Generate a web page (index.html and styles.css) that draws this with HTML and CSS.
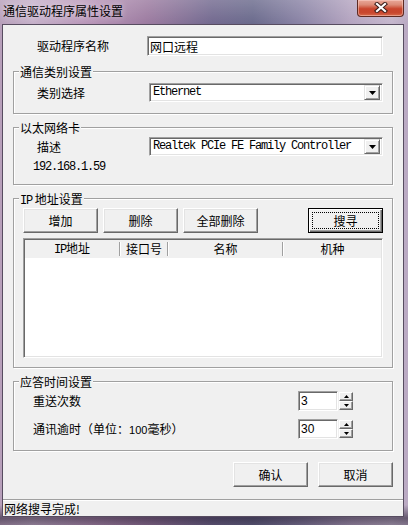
FILE: index.html
```html
<!DOCTYPE html>
<html lang="zh-CN">
<head>
<meta charset="utf-8">
<title>通信驱动程序属性设置</title>
<link rel="stylesheet" href="styles.css">
</head>
<body>
<div class="window">
  <div class="titlebar">
    <span class="title">通信驱动程序属性设置</span>
    <button class="close" type="button" aria-label="关闭">
      <svg width="14" height="11" viewBox="0 0 14 11"><path d="M3 2 L11 9 M11 2 L3 9" stroke="#3b1d19" stroke-width="4.2" stroke-linecap="square" fill="none"/><path d="M3 2 L11 9 M11 2 L3 9" stroke="#ffffff" stroke-width="2.2" stroke-linecap="square" fill="none"/></svg>
    </button>
  </div>
  <div class="client">
    <div class="content">
      <div class="name-row">
        <span class="lbl">驱动程序名称</span>
        <div class="edit name-edit">网口远程</div>
      </div>

      <div class="group g1">
        <span class="gtitle">通信类别设置</span>
        <div class="gbody">
          <div class="row">
            <span class="lbl wide">类别选择</span>
            <div class="combo"><span class="ctext m">Ethernet</span><span class="drop"><svg width="7" height="4" viewBox="0 0 7 4"><polygon points="0,0 7,0 3.5,4" fill="#000"/></svg></span></div>
          </div>
        </div>
      </div>

      <div class="group g2">
        <span class="gtitle">以太网络卡</span>
        <div class="gbody">
          <div class="row">
            <span class="lbl wide">描述</span>
            <div class="combo"><span class="ctext m">Realtek PCIe FE Family Controller</span><span class="drop"><svg width="7" height="4" viewBox="0 0 7 4"><polygon points="0,0 7,0 3.5,4" fill="#000"/></svg></span></div>
          </div>
          <div class="ip m">192.168.1.59</div>
        </div>
      </div>

      <div class="group g3">
        <span class="gtitle"><span class="m">IP</span> 地址设置</span>
        <div class="gbody">
          <div class="btnrow">
            <button class="btn" type="button">增加</button>
            <button class="btn" type="button">删除</button>
            <button class="btn" type="button">全部删除</button>
            <button class="btn default" type="button"><span class="focus">搜寻</span></button>
          </div>
          <div class="list">
            <div class="lhead">
              <span class="hc"><span class="m">IP</span>地址</span><i class="sep"></i>
              <span class="hc">接口号</span><i class="sep"></i>
              <span class="hc">名称</span><i class="sep"></i>
              <span class="hc">机种</span>
            </div>
          </div>
        </div>
      </div>

      <div class="group g4">
        <span class="gtitle">应答时间设置</span>
        <div class="gbody">
          <div class="srow">
            <span class="slbl">重送次数</span>
            <div class="spin"><div class="edit sedit">3</div><div class="updown"><span class="ud"><svg width="5" height="3" viewBox="0 0 5 3"><polygon points="2.5,0 5,3 0,3" fill="#000"/></svg></span><span class="ud"><svg width="5" height="3" viewBox="0 0 5 3"><polygon points="0,0 5,0 2.5,3" fill="#000"/></svg></span></div></div>
          </div>
          <div class="srow second">
            <span class="slbl">通讯逾时（单位：<span class="s">100</span>毫秒）</span>
            <div class="spin"><div class="edit sedit">30</div><div class="updown"><span class="ud"><svg width="5" height="3" viewBox="0 0 5 3"><polygon points="2.5,0 5,3 0,3" fill="#000"/></svg></span><span class="ud"><svg width="5" height="3" viewBox="0 0 5 3"><polygon points="0,0 5,0 2.5,3" fill="#000"/></svg></span></div></div>
          </div>
        </div>
      </div>

      <div class="okrow">
        <button class="btn" type="button">确认</button>
        <button class="btn" type="button">取消</button>
      </div>
    </div>
    <div class="status">网络搜寻完成!</div>
  </div>
</div>
</body>
</html>
```

FILE: styles.css
```css
* { box-sizing: border-box; }
html, body { margin: 0; padding: 0; }
body {
  width: 408px;
  height: 525px;
  overflow: hidden;
  font-family: "Noto Sans CJK SC", "Noto Sans", sans-serif;
  font-size: 12px;
  line-height: 14px;
  color: #000;
}
button { font: inherit; color: inherit; margin: 0; padding: 0; }

.m {
  font-family: "Liberation Mono", monospace;
  font-size: 12px;
  letter-spacing: -1.2px;
}
.s { font-family: "Liberation Sans", sans-serif; font-size: 11px; }

.window {
  width: 408px;
  height: 525px;
  display: flex;
  flex-direction: column;
  background:
    linear-gradient(180deg, rgba(255,255,255,0.18) 0, rgba(255,255,255,0) 24px, rgba(0,0,0,0) 505px, rgba(30,20,40,0.55) 518px, rgba(30,20,40,0.35) 525px),
    linear-gradient(90deg, #b79fba 0%, #c5b0c9 8%, #b895b8 22%, #9c7ba0 36%, #72698f 52%, #6a6a8c 62%, #8b84a6 74%, #b4a4c0 86%, #c4b6cc 96%, #b9a9c2 100%);
}

.titlebar {
  height: 24px;
  display: flex;
  align-items: flex-start;
}
.title {
  margin: 4px 0 0 3px;
  line-height: 14px;
  text-shadow: 0 0 6px rgba(255,255,255,0.7);
}
.close {
  margin-left: auto;
  margin-right: 4px;
  width: 47px;
  height: 17px;
  border: 1px solid #5e2a23;
  border-top: none;
  border-radius: 0 0 4px 4px;
  background: linear-gradient(180deg, #e9a899 0%, #dc8b77 30%, #c9452d 55%, #c8472f 80%, #d96b4c 100%);
  box-shadow: inset 0 0 0 1px rgba(255,220,210,0.45);
  display: flex;
  align-items: center;
  justify-content: center;
}
.close svg { display: block; margin-top: -1px; }

.client {
  flex: 1;
  margin: 0 4px 8px 2px;
  border: 1px solid #574c60;
  background: #f0f0f0;
  display: flex;
  flex-direction: column;
}
.content {
  padding: 0 10px;
  display: flex;
  flex-direction: column;
}

/* sunken edit */
.edit {
  background: #fff;
  border: 1px solid;
  border-color: #a0a0a0 #fff #fff #a0a0a0;
  box-shadow: inset 1px 1px 0 #696969, inset -1px -1px 0 #e3e3e3;
}

.name-row {
  margin-top: 11px;
  padding-left: 24px;
  display: flex;
  align-items: center;
  height: 20px;
}
.name-row .lbl { width: 110px; }
.name-edit {
  width: 236px;
  height: 20px;
  padding: 2px 0 0 2px;
  line-height: 15px;
}

/* group box */
.group {
  border: 1px solid #a0a0a0;
  box-shadow: inset 1px 1px 0 #fff, 1px 1px 0 #fff;
  display: flex;
  flex-direction: column;
}
.gtitle {
  align-self: flex-start;
  margin: -7px 0 0 5px;
  padding: 0 1px;
  height: 13px;
  line-height: 13px;
  background: #f0f0f0;
}
.g1 { margin-top: 15px; }
.g2, .g3, .g4 { margin-top: 13px; }
.g1 .gbody { padding: 5px 0 11px 0; }
.g2 .gbody { padding: 3px 0 10px 0; }
.g3 .gbody { padding: 3px 9px 9px 9px; }
.g4 .gbody { padding: 3px 39px 11px 0; }

.row {
  display: flex;
  align-items: center;
  padding-left: 23px;
}
.lbl.wide { width: 112px; }
.combo {
  width: 234px;
  height: 19px;
  background: #fff;
  border: 1px solid;
  border-color: #a0a0a0 #fff #fff #a0a0a0;
  box-shadow: inset 1px 1px 0 #696969, inset -1px -1px 0 #e3e3e3;
  display: flex;
  align-items: center;
  padding: 1px 2px 1px 3px;
}
.ctext { flex: 1; white-space: nowrap; line-height: 15px; }
.drop {
  width: 16px;
  height: 15px;
  background: #f0f0f0;
  border: 1px solid;
  border-color: #e3e3e3 #696969 #696969 #e3e3e3;
  box-shadow: inset 1px 1px 0 #fff, inset -1px -1px 0 #a0a0a0;
  display: flex;
  align-items: center;
  justify-content: center;
}
.drop svg { display: block; }

.ip {
  margin-top: 4px;
  padding-left: 19px;
  height: 14px;
  line-height: 14px;
}

/* buttons */
.btn {
  width: 75px;
  height: 25px;
  background: #f0f0f0;
  border: 1px solid;
  border-color: #fff #696969 #696969 #fff;
  box-shadow: inset -1px -1px 0 #a0a0a0, inset 1px 1px 0 #e3e3e3;
  line-height: 14px;
  display: flex;
  align-items: center;
  justify-content: center;
}
.btn.default {
  border: 1px solid #000;
  box-shadow: inset 1px 1px 0 #fff, inset -1px -1px 0 #696969, inset -2px -2px 0 #a0a0a0;
  margin-left: auto;
  padding: 3px;
}
.focus {
  flex: 1;
  align-self: stretch;
  border: 1px dotted #000;
  display: flex;
  align-items: center;
  justify-content: center;
}
.btnrow {
  display: flex;
  gap: 5px;
  height: 25px;
}

/* list view */
.list {
  margin-top: 5px;
  height: 120px;
  background: #fff;
  border: 1px solid;
  border-color: #a0a0a0 #fff #fff #a0a0a0;
  box-shadow: inset 1px 1px 0 #696969, inset -1px -1px 0 #e3e3e3;
  padding: 1px;
}
.lhead {
  height: 18px;
  background: #f0f0f0;
  display: grid;
  grid-template-columns: 94px 2px 46px 2px 113px 2px 1fr;
  align-items: center;
}
.hc { text-align: center; line-height: 14px; white-space: nowrap; }
.sep {
  height: 14px;
  border-left: 1px solid #a0a0a0;
  border-right: 1px solid #fff;
}

/* spin rows */
.srow {
  display: flex;
  align-items: center;
  padding-left: 19px;
  height: 20px;
}
.srow.second { margin-top: 8px; }
.slbl { flex: 1; white-space: nowrap; }
.spin { display: flex; gap: 1px; }
.sedit {
  width: 40px;
  height: 20px;
  padding: 2px 0 0 2px;
  font-family: "Liberation Sans", sans-serif;
  font-size: 12px;
  line-height: 15px;
}
.updown {
  width: 14px;
  height: 20px;
  display: flex;
  flex-direction: column;
  padding-top: 1px;
}
.ud {
  height: 9px;
  background: #f0f0f0;
  border: 1px solid;
  border-color: #fff #696969 #696969 #fff;
  box-shadow: inset -1px -1px 0 #a0a0a0;
  display: flex;
  align-items: center;
  justify-content: center;
}
.ud svg { display: block; }

.okrow {
  margin-top: 11px;
  display: flex;
  justify-content: flex-end;
  gap: 10px;
}

.status {
  margin-top: auto;
  height: 17px;
  border-top: 1px solid #a0a0a0;
  box-shadow: inset 0 1px 0 #fff;
  padding: 2px 0 0 1px;
  line-height: 14px;
  white-space: nowrap;
}
```
